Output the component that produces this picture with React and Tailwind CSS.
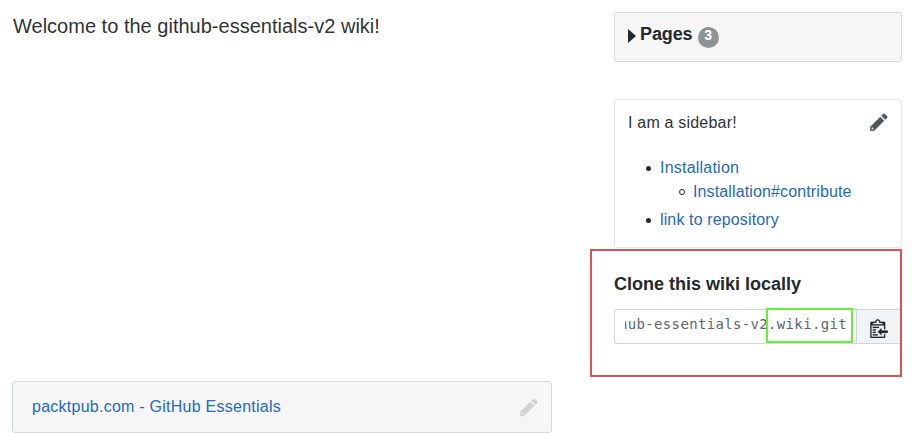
function Pencil({ className }) {
  return (
    <svg viewBox="0 0 14 16" className={className} fill="currentColor" stroke="currentColor" strokeWidth="0.35" aria-hidden="true">
      <path d="M0 12v3h3l8-8-3-3-8 8zm3 2H1v-2h1v1h1v1zm10.3-9.3L12 6 9 3l1.3-1.3a.996.996 0 0 1 1.41 0l1.59 1.59c.39.39.39 1.02 0 1.41z" />
    </svg>
  );
}

function Clippy({ className }) {
  return (
    <svg viewBox="0 0 14 16" className={className} fill="currentColor" stroke="currentColor" strokeWidth="0.15" aria-hidden="true">
      <path d="M2 13h4v1H2v-1zm5-6H2v1h5V7zm2 3V8l-3 3 3 3v-2h5v-2H9zM4.5 9H2v1h2.5V9zM2 12h2.5v-1H2v1zm9 1h1v2c-.02.28-.11.52-.3.7-.19.18-.42.28-.7.3H1c-.55 0-1-.45-1-1V4c0-.55.45-1 1-1h3c0-1.11.89-2 2-2 1.11 0 2 .89 2 2h3c.55 0 1 .45 1 1v5h-1V6H1v9h10v-2zM2 5h8c0-.55-.45-1-1-1H8c-.55 0-1-.45-1-1s-.45-1-1-1-1 .45-1 1-.45 1-1 1H3c-.55 0-1 .45-1 1z" />
    </svg>
  );
}

export default function App() {
  return (
    <div className="relative flex h-[433px] w-[914px] overflow-hidden bg-white pl-3 pt-3 font-['Liberation_Sans',Arial,sans-serif] whitespace-nowrap text-[#2f3437]">
      <main className="flex w-[540px] shrink-0 flex-col justify-between">
        <p className="pl-px text-[20px] leading-7 tracking-[0.01px]">Welcome to the github-essentials-v2 wiki!</p>
        <footer className="flex h-[52px] items-center justify-between rounded-[3px] border border-[#d5d9da] bg-[#f6f6f6] pr-[13px] pl-[19px]">
          <a className="text-[16px] tracking-[0.25px] text-[#1f69be]">packtpub.com - GitHub Essentials</a>
          <Pencil className="h-5 w-[18px] text-[#d2d2d2]" />
        </footer>
      </main>

      <aside className="ml-[62px] w-[288px] shrink-0">
        <section className="flex h-[50px] items-center rounded-[3px] border border-[#d9dbdc] bg-[#f6f6f6] pl-[13px]">
          <span className="mb-[3px] h-0 w-0 border-y-[7px] border-l-[8px] border-y-transparent border-l-[#24292e]" />
          <h3 className="ml-[4px] pb-[5px] text-[18px] font-bold tracking-[-0.1px] text-[#24292e]">Pages</h3>
          <span className="ml-[5px] flex h-[21px] w-[21px] justify-center rounded-full bg-[#909394] text-[14px] leading-[17px] font-bold text-white">3</span>
        </section>

        <section className="mt-[37px] h-[149px] rounded-[3px] border border-[#e4e5e6] pl-[13px] text-[16px]">
          <div className="flex items-start justify-between pt-3 pr-[13px]">
            <p className="leading-[22px] tracking-[0.2px]">I am a sidebar!</p>
            <Pencil className="h-5 w-[18px] text-[#51575a]" />
          </div>
          <ul className="mt-[22px] pl-[18px] leading-6 tracking-[0.13px] text-[#1f69be]">
            <li className="flex items-center">
              <span className="mr-[9px] h-[5px] w-[5px] rounded-full bg-[#24292e]" />
              <a className="tracking-[0.22px]">Installation</a>
            </li>
            <li className="flex items-center pl-[33px]">
              <span className="mr-2 h-[6px] w-[6px] rounded-full border border-[#24292e]" />
              <a>Installation#contribute</a>
            </li>
            <li className="mt-[4px] flex items-center">
              <span className="mr-[9px] h-[5px] w-[5px] rounded-full bg-[#24292e]" />
              <a>link to repository</a>
            </li>
          </ul>
        </section>

        <h3 className="mt-[24px] text-[18px] leading-6 font-bold text-[#24292e]">Clone this wiki locally</h3>
        <div className="mt-[13px] flex h-[35px] w-[286px]">
          <div className="flex w-[242px] items-center justify-end overflow-hidden rounded-l-[3px] border border-r-0 border-[#d5d8da] pr-[9px] pl-[10px]">
            <div className="flex w-[223px] justify-end overflow-hidden pb-[4px] font-['DejaVu_Sans_Mono','Liberation_Mono',monospace] text-[14px] tracking-[0.34px] text-[#61666a]">
              <span>hub-essentials-v2.wiki.git</span>
            </div>
          </div>
          <button className="flex flex-1 items-center justify-center border border-r-0 border-[#d2d5d8] bg-[#f1f4f7] pt-[3px]">
            <Clippy className="h-5 w-[18px] text-[#24292e]" />
          </button>
        </div>
      </aside>

      <div className="absolute top-[249px] left-[590px] h-[128px] w-[312px] border-2 border-[#dc5256]" />
      <div className="absolute top-[308px] left-[766px] h-[35px] w-[87px] border-2 border-[#66f03c]" />
    </div>
  );
}
